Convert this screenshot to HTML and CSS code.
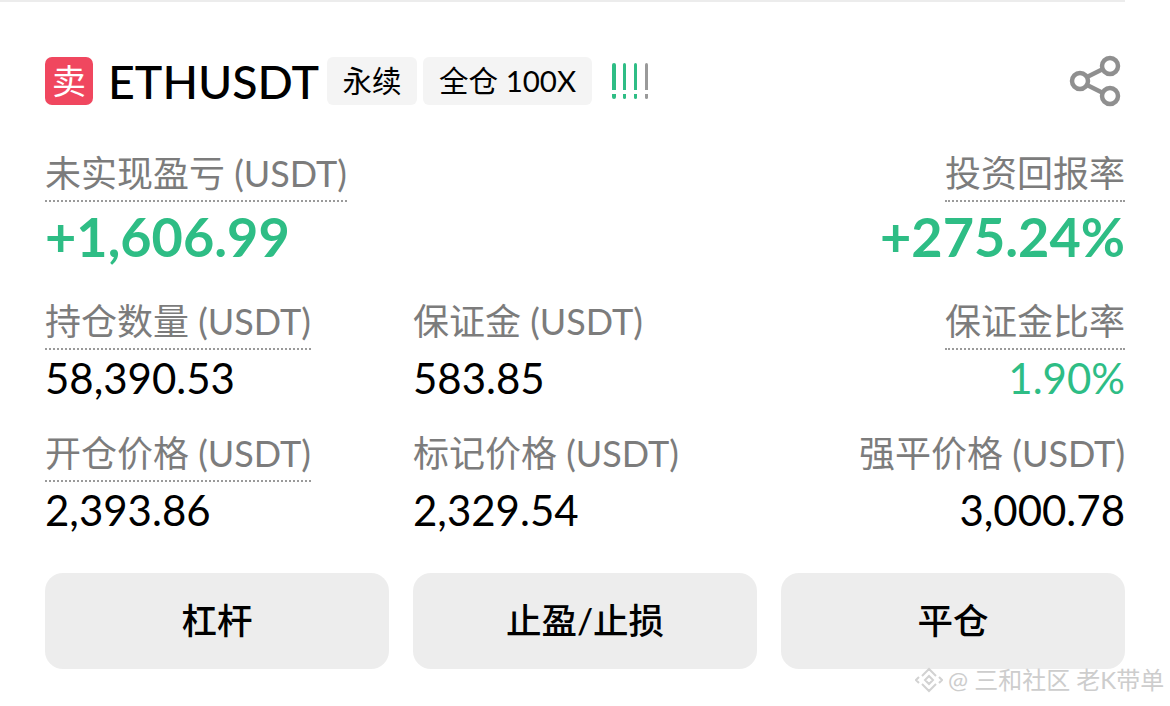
FILE: index.html
```html
<!DOCTYPE html>
<html lang="zh-CN">
<head>
    <meta charset="UTF-8">
    <meta name="viewport" content="width=device-width, initial-scale=1.0">
    <title>ETHUSDT</title>
    <link rel="stylesheet" href="styles.css">
</head>
<body>

    <div class="top-line"></div>

    <div class="position-card">
        <div class="card-head">
            <span class="side-badge">卖</span>
            <span class="symbol">ETHUSDT</span>
            <span class="tag">永续</span>
            <span class="tag tag-wide">全仓 100X</span>
            <span class="risk">
                <i class="risk-on"></i><i class="risk-on"></i><i class="risk-on"></i><i class="risk-off"></i>
            </span>
            <svg class="share" width="54" height="50" viewBox="0 0 54 50" fill="none" stroke="#8f8f8f" stroke-width="4.500">
                <circle cx="39" cy="10" r="8"/>
                <circle cx="9" cy="25" r="8"/>
                <circle cx="39" cy="40" r="8"/>
                <path d="M16 21l16-8M16 29l16 8"/>
            </svg>
        </div>

        <div class="pnl-row">
            <div class="stat">
                <span class="label dotted">未实现盈亏 (USDT)</span>
                <span class="pnl green">+1,606.99</span>
            </div>
            <div class="stat stat-right">
                <span class="label dotted">投资回报率</span>
                <span class="pnl green">+275.24%</span>
            </div>
        </div>

        <div class="stat-grid">
            <div class="stat">
                <span class="label dotted">持仓数量 (USDT)</span>
                <span class="value">58,390.53</span>
            </div>
            <div class="stat">
                <span class="label">保证金 (USDT)</span>
                <span class="value">583.85</span>
            </div>
            <div class="stat stat-right">
                <span class="label dotted">保证金比率</span>
                <span class="value green">1.90%</span>
            </div>
            <div class="stat">
                <span class="label dotted">开仓价格 (USDT)</span>
                <span class="value">2,393.86</span>
            </div>
            <div class="stat">
                <span class="label">标记价格 (USDT)</span>
                <span class="value">2,329.54</span>
            </div>
            <div class="stat stat-right">
                <span class="label">强平价格 (USDT)</span>
                <span class="value">3,000.78</span>
            </div>
        </div>

        <div class="actions">
            <button class="btn">杠杆</button>
            <button class="btn">止盈/止损</button>
            <button class="btn">平仓</button>
        </div>
    </div>

    <div class="watermark">
        <svg width="28" height="28" viewBox="0 0 28 28" fill="none" stroke="#d2d2d2" stroke-width="2">
            <path d="M7 10l7-7 7 7M7 18l7 7 7-7M14 10l4 4-4 4-4-4zM4 11l-3 3 3 3M24 11l3 3-3 3"/>
        </svg>
        <span>@ 三和社区 老K带单</span>
    </div>

</body>
</html>
```

FILE: styles.css
```css
* {
    box-sizing: border-box;
}

body {
    margin: 0;
    height: 706px;
    overflow: hidden;
    background: #fff;
    color: #000;
    font-family: Lato, "Noto Sans CJK SC", sans-serif;
}

.top-line {
    width: 1125px;
    height: 2px;
    background: #ececec;
}

.position-card {
    padding: 55px 45px 0 45px;
}

.card-head {
    display: flex;
    align-items: center;
    height: 48px;
}

.side-badge {
    width: 48px;
    height: 48px;
    border-radius: 7px;
    background: #f0475f;
    color: #fff;
    font-size: 34px;
    line-height: 48px;
    text-align: center;
}

.symbol {
    margin-left: 15px;
    margin-right: 8px;
    font-size: 46.500px;
    font-weight: 500;
    line-height: 48px;
    white-space: nowrap;
}

.tag {
    width: 90px;
    height: 48px;
    margin-right: 6px;
    border-radius: 6px;
    background: #f4f4f4;
    font-size: 29.500px;
    line-height: 48px;
    text-align: center;
    white-space: nowrap;
}

.tag-wide {
    width: 169px;
}

.risk {
    display: flex;
    gap: 7.400px;
    margin-left: 14px;
}

.risk i {
    display: block;
    width: 3.500px;
    height: 36px;
    border-radius: 2px;
}

.risk-on {
    background: linear-gradient(#2ebd85 0 27px, transparent 27px 31px, #2ebd85 31px);
}

.risk-off {
    background: linear-gradient(#9a9a9a 0 27px, transparent 27px 31px, #9a9a9a 31px);
}

.share {
    margin-left: auto;
    overflow: visible;
}

.pnl-row {
    display: flex;
    justify-content: space-between;
    margin-top: 45px;
}

.stat {
    display: flex;
    flex-direction: column;
    align-items: flex-start;
}

.stat-right {
    align-items: flex-end;
}

.label {
    height: 52px;
    color: #7c7c7c;
    font-size: 36px;
    line-height: 46px;
    white-space: nowrap;
}

.dotted {
    border-bottom: 2px dotted #9a9a9a;
}

.green {
    color: #2ebd85;
}

.pnl {
    margin-top: 5px;
    font-size: 54px;
    font-weight: 700;
    line-height: 60px;
}

.value {
    margin-top: 2px;
    font-size: 42px;
    line-height: 52px;
}

.stat-grid {
    display: grid;
    grid-template-columns: 368px 1fr auto;
    row-gap: 26px;
    margin-top: 31px;
}

.actions {
    display: grid;
    grid-template-columns: repeat(3, 344px);
    column-gap: 24px;
    margin-top: 37px;
}

.btn {
    height: 96px;
    padding: 0 0 5px;
    border: none;
    border-radius: 18px;
    background: #ededed;
    color: #000;
    font-family: inherit;
    font-size: 35.500px;
    font-weight: 500;
}

.watermark {
    position: absolute;
    left: 915px;
    top: 666px;
    display: flex;
    align-items: center;
    gap: 5px;
    color: #cdcdcd;
    font-size: 24px;
    line-height: 28px;
    white-space: nowrap;
}
```
